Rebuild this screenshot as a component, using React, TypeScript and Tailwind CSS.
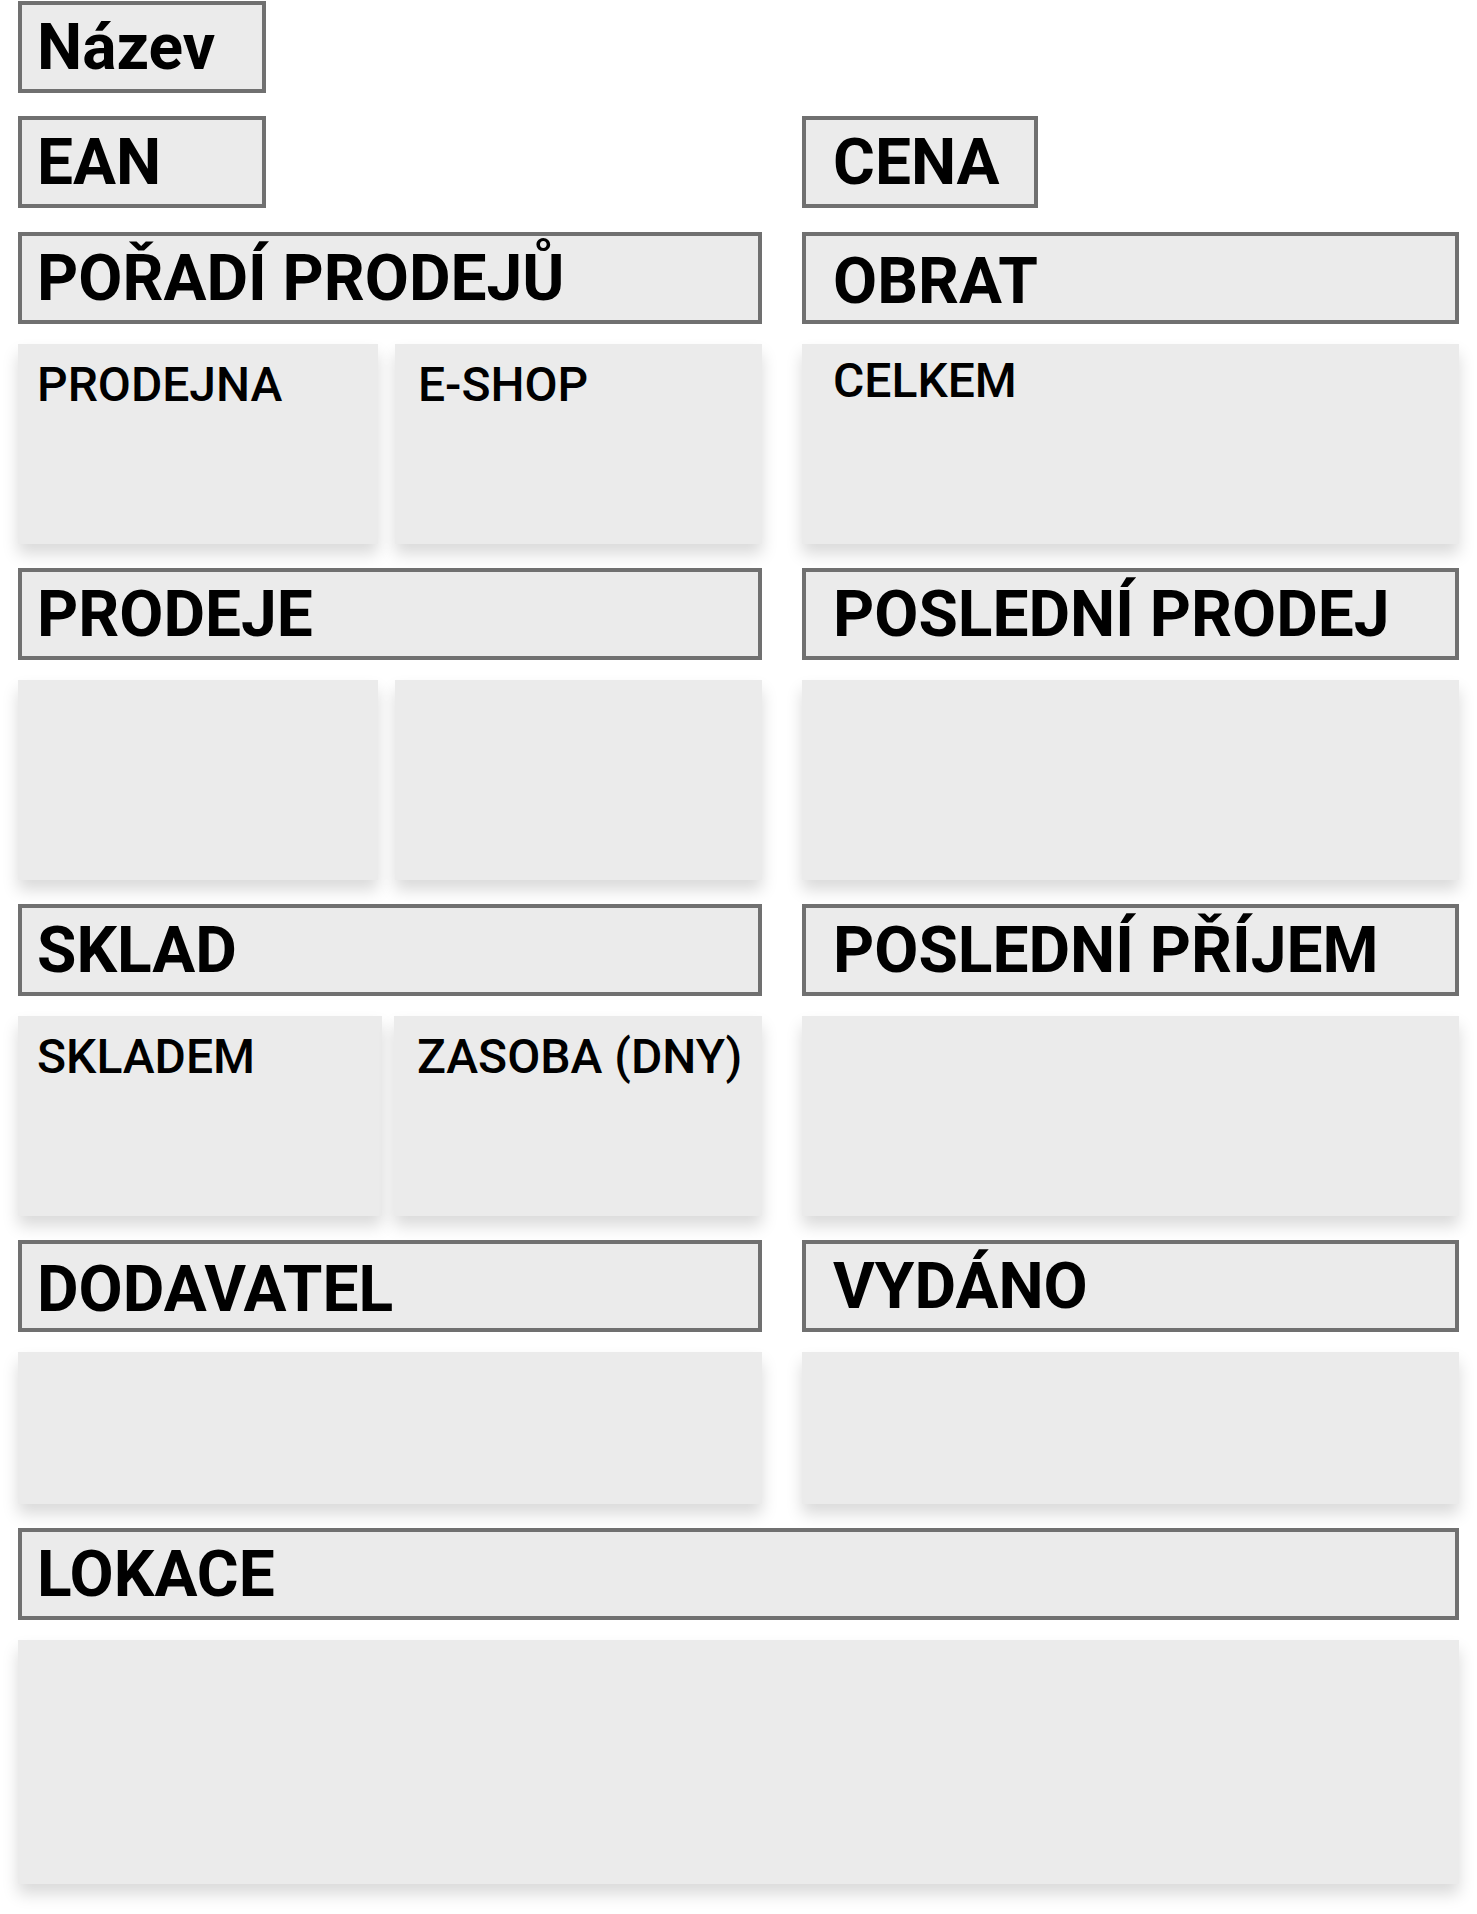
import React from "react";

function Header({
  title,
  className = "",
  shift = false,
  right = false,
}: {
  title: string;
  className?: string;
  shift?: boolean;
  right?: boolean;
}) {
  return (
    <div
      className={`h-[92px] border-4 border-[#707070] bg-[#ebebeb] flex items-center ${
        right ? "pl-[27px]" : "pl-[15px]"
      } ${shift ? "pt-[6px]" : ""} ${className}`}
    >
      <span className="text-[64px] leading-[75px] font-bold text-black whitespace-nowrap">
        {title}
      </span>
    </div>
  );
}

function Card({
  label,
  h,
  pad = "pl-[19px] pt-[13px]",
}: {
  label?: string;
  h: string;
  pad?: string;
}) {
  return (
    <div
      className={`${h} bg-[#ebebeb] shadow-[0_10px_15px_rgba(0,0,0,0.15)] ${pad}`}
    >
      {label && (
        <span className="text-[48px] leading-[56px] font-medium text-black whitespace-nowrap">
          {label}
        </span>
      )}
    </div>
  );
}

export default function App() {
  return (
    <div className="w-[1477px] min-h-[1914px] bg-white font-[Roboto] px-[18px] pt-[1px] pb-[30px]">
      <div className="grid grid-cols-[744px_1fr] gap-x-[40px]">
        {/* Row: Název */}
        <div className="col-span-2">
          <Header title="Název" className="w-[248px]" />
        </div>

        {/* Row: EAN / CENA */}
        <div className="mt-[23px]">
          <Header title="EAN" className="w-[248px]" />
        </div>
        <div className="mt-[23px]">
          <Header title="CENA" className="w-[236px]" right />
        </div>

        {/* Row: POŘADÍ PRODEJŮ / OBRAT */}
        <div className="mt-[24px]">
          <Header title="POŘADÍ PRODEJŮ" />
          <div className="mt-[20px] grid grid-cols-[360px_1fr] gap-x-[17px]">
            <Card label="PRODEJNA" h="h-[200px]" />
            <Card label="E-SHOP" h="h-[200px]" pad="pl-[23px] pt-[13px]" />
          </div>
        </div>
        <div className="mt-[24px]">
          <Header title="OBRAT" right shift />
          <div className="mt-[20px]">
            <Card label="CELKEM" h="h-[200px]" pad="pl-[31px] pt-[9px]" />
          </div>
        </div>

        {/* Row: PRODEJE / POSLEDNÍ PRODEJ */}
        <div className="mt-[24px]">
          <Header title="PRODEJE" />
          <div className="mt-[20px] grid grid-cols-[360px_1fr] gap-x-[17px]">
            <Card h="h-[200px]" />
            <Card h="h-[200px]" />
          </div>
        </div>
        <div className="mt-[24px]">
          <Header title="POSLEDNÍ PRODEJ" right />
          <div className="mt-[20px]">
            <Card h="h-[200px]" />
          </div>
        </div>

        {/* Row: SKLAD / POSLEDNÍ PŘÍJEM */}
        <div className="mt-[24px]">
          <Header title="SKLAD" />
          <div className="mt-[20px] grid grid-cols-[364px_1fr] gap-x-[12px]">
            <Card label="SKLADEM" h="h-[200px]" />
            <Card label="ZASOBA (DNY)" h="h-[200px]" pad="pl-[23px] pt-[13px]" />
          </div>
        </div>
        <div className="mt-[24px]">
          <Header title="POSLEDNÍ PŘÍJEM" right />
          <div className="mt-[20px]">
            <Card h="h-[200px]" />
          </div>
        </div>

        {/* Row: DODAVATEL / VYDÁNO */}
        <div className="mt-[24px]">
          <Header title="DODAVATEL" shift />
          <div className="mt-[20px]">
            <Card h="h-[152px]" />
          </div>
        </div>
        <div className="mt-[24px]">
          <Header title="VYDÁNO" right />
          <div className="mt-[20px]">
            <Card h="h-[152px]" />
          </div>
        </div>

        {/* Row: LOKACE */}
        <div className="col-span-2 mt-[24px]">
          <Header title="LOKACE" />
          <div className="mt-[20px]">
            <Card h="h-[244px]" />
          </div>
        </div>
      </div>
    </div>
  );
}
